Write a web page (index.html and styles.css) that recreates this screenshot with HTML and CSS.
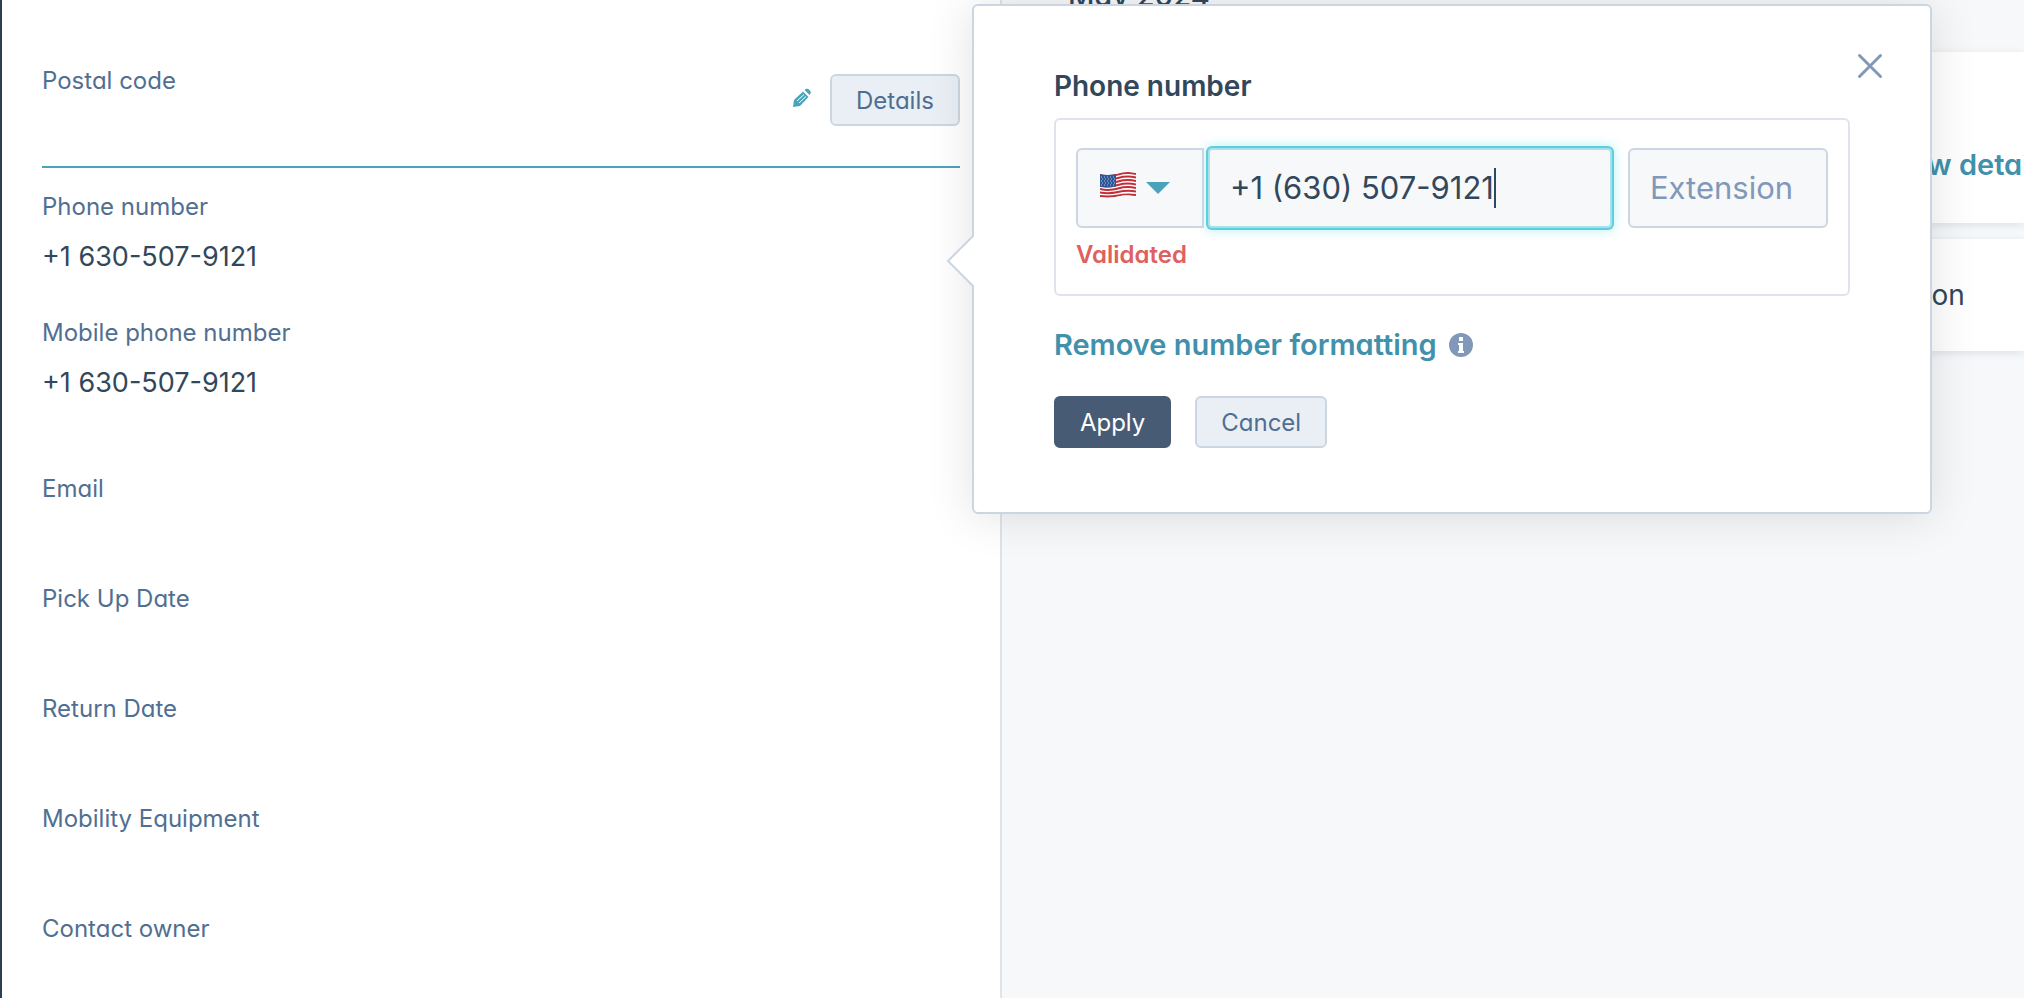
FILE: index.html
```html
<!DOCTYPE html>
<html lang="en">
<head>
    <meta charset="UTF-8">
    <title>Contact</title>
    <link rel="stylesheet" href="styles.css">
</head>
<body>
    <aside class="sidebar">
        <div class="field field-active">
            <div class="field-text">
                <div class="label">Postal code</div>
            </div>
            <div class="field-actions">
                <button class="icon-btn" type="button" aria-label="Edit">
                    <svg width="20" height="20" viewBox="0 0 20 20">
                        <path fill="#4ba3bb" d="M1 19l1-7L11 3.500l5.500 5.500L8 18z"/>
                        <path fill="#4ba3bb" d="M12.500 2c2-2 3.500-1.500 5 0s2 3 0 5z"/>
                        <path stroke="#fff" stroke-width="1" d="M5 13l7-6.500M7 15l7-6.500"/>
                    </svg>
                </button>
                <button class="btn" type="button">Details</button>
            </div>
        </div>

        <div class="field">
            <div class="field-text">
                <div class="label">Phone number</div>
                <div class="value">+1 630-507-9121</div>
            </div>

            <form class="popover">
                <svg class="popover-arrow" width="28" height="54" viewBox="0 0 28 54">
                    <path fill="#fff" stroke="#cbd6e2" stroke-width="2" d="M28 1L2 27l26 26"/>
                </svg>
                <button class="close-btn" type="button" aria-label="Close">
                    <svg width="28" height="28" viewBox="0 0 28 28">
                        <path stroke="#8298b8" stroke-width="3" stroke-linecap="round" d="M3.500 3.500l21 21M24.500 3.500l-21 21"/>
                    </svg>
                </button>
                <label class="popover-title" for="phone">Phone number</label>
                <div class="phone-box">
                    <div class="phone-row">
                        <div class="country">
                            <select class="country-select" aria-label="Country">
                                <option value="us" aria-label="United States"></option>
                            </select>
                            <svg class="flag" width="36" height="28" viewBox="0 0 36 28">
                                <clipPath id="wave">
                                    <path d="M0 3Q9 5 18 2.500T36 2V26Q27 23 18 25.500T0 26z"/>
                                </clipPath>
                                <g clip-path="url(#wave)">
                                    <path fill="#fff" d="M0 0h36v28H0z"/>
                                    <g fill="none" stroke="#c0303a" stroke-width="2">
                                        <path d="M0 4Q9 6 18 3.500T36 3"/>
                                        <path d="M0 7.500Q9 9.500 18 7T36 6.500"/>
                                        <path d="M0 11Q9 13 18 10.500T36 10"/>
                                        <path d="M0 14.500Q9 16.500 18 14T36 13.500"/>
                                        <path d="M0 18Q9 20 18 17.500T36 17"/>
                                        <path d="M0 21.500Q9 23 18 21T36 20.500"/>
                                        <path d="M0 25Q9 26 18 24.500T36 24"/>
                                    </g>
                                    <path fill="#2f5798" d="M0 0h16v15.500Q8 17 0 16z"/>
                                    <path stroke="#a9bfe0" stroke-width="1" stroke-dasharray="1 2" d="M1 6h15M2 8h14M1 10h15M2 12h14M1 14h15"/>
                                </g>
                            </svg>
                            <svg class="caret" width="24" height="12" viewBox="0 0 24 12">
                                <path fill="#4ba3bb" d="M0 0h24L12 12z"/>
                            </svg>
                        </div>
                        <div class="phone-input">
                            <input type="tel" id="phone" value="+1 (630) 507-9121">
                            <span class="text-cursor"></span>
                        </div>
                        <input class="extension" type="text" placeholder="Extension" aria-label="Extension">
                    </div>
                    <div class="validation">Validated</div>
                </div>
                <div class="format-row">
                    <a class="link" href="#">Remove number formatting</a>
                    <svg width="24" height="24" viewBox="0 0 24 24">
                        <circle cx="12" cy="12" r="12" fill="#8298b8"/>
                        <path fill="#fff" d="M10 4h4v4h-4zM9 10h5v8h1v2H9v-2h1v-6H9z"/>
                    </svg>
                </div>
                <div class="popover-buttons">
                    <button class="btn btn-primary" type="submit">Apply</button>
                    <button class="btn" type="button">Cancel</button>
                </div>
            </form>
        </div>

        <div class="field field-last">
            <div class="field-text">
                <div class="label">Mobile phone number</div>
                <div class="value">+1 630-507-9121</div>
            </div>
        </div>

        <div class="field field-empty"><div class="label">Email</div></div>
        <div class="field field-empty"><div class="label">Pick Up Date</div></div>
        <div class="field field-empty"><div class="label">Return Date</div></div>
        <div class="field field-empty"><div class="label">Mobility Equipment</div></div>
        <div class="field field-empty"><div class="label">Contact owner</div></div>
    </aside>

    <main class="timeline">
        <h2 class="month">May 2024</h2>
        <div class="card card-tall"><a class="link" href="#">View details</a></div>
        <div class="card"><span class="card-text">Association</span></div>
    </main>
</body>
</html>
```

FILE: styles.css
```css
* {
    box-sizing: border-box;
}

body {
    margin: 0;
    height: 100vh;
    display: flex;
    overflow: hidden;
    font-family: Inter, "Open Sans", sans-serif;
    font-feature-settings: "cv11";
    font-size: 24px;
    line-height: 32px;
    color: #33475b;
    background-color: #f6f8fa;
}

button, input, select {
    font: inherit;
    font-feature-settings: inherit;
    color: inherit;
}

.sidebar {
    flex: none;
    width: 49.5%;
    padding: 42px 40px 0;
    background-color: #fff;
    border-left: 2px solid #2d3e50;
    border-right: 2px solid #dfe3eb;
}

.field {
    position: relative;
    display: flex;
    justify-content: space-between;
    height: 126px;
    padding-top: 23px;
}

.field-active {
    border-bottom: 2px solid #4ba3bb;
}

.field-last {
    margin-bottom: 30px;
}

.field-empty {
    height: 110px;
}

.field-actions {
    display: flex;
    align-items: center;
    align-self: flex-start;
    gap: 18px;
    margin-top: 9px;
}

.label {
    color: #516f90;
}

.value {
    margin-top: 14px;
    font-size: 27px;
    line-height: 40px;
}

.btn {
    height: 52px;
    padding: 2px 24px 0;
    color: #506e91;
    background-color: #eaeff6;
    border: 2px solid #cbd6e2;
    border-radius: 6px;
    cursor: pointer;
}

.btn-primary {
    color: #fff;
    background-color: #475b74;
    border-color: #475b74;
}

.icon-btn, .close-btn {
    display: flex;
    padding: 0;
    background: none;
    border: none;
    cursor: pointer;
}

.icon-btn {
    padding-bottom: 4px;
}

/* popover */
.popover {
    position: absolute;
    z-index: 2;
    top: -164px;
    left: calc(100% + 12px);
    width: 960px;
    height: 510px;
    padding: 60px 80px 0;
    background-color: #fff;
    border: 2px solid #cbd6e2;
    border-radius: 6px;
    box-shadow: 0 2px 48px rgba(0, 0, 0, 0.12);
}

.popover-arrow {
    position: absolute;
    top: 228px;
    left: -28px;
}

.close-btn {
    position: absolute;
    top: 46px;
    right: 46px;
}

.popover-title {
    display: block;
    margin-bottom: 12px;
    font-size: 28px;
    line-height: 40px;
    font-weight: 600;
}

.phone-box {
    height: 178px;
    padding: 28px 20px 0;
    border: 2px solid #dfe3eb;
    border-radius: 6px;
}

.phone-row {
    display: flex;
    height: 80px;
    font-size: 31px;
}

.country {
    position: relative;
    width: 128px;
    margin-right: 4px;
}

.country-select {
    width: 100%;
    height: 100%;
    appearance: none;
    background-color: #f6f8fa;
    border: 2px solid #cbd6e2;
    border-radius: 6px 0 0 6px;
}

.flag, .caret {
    position: absolute;
    pointer-events: none;
}

.flag {
    top: 23px;
    left: 24px;
}

.caret {
    top: 34px;
    left: 70px;
}

.phone-input {
    flex: 1;
    display: flex;
    align-items: center;
    margin-right: 16px;
    padding-left: 20px;
    background-color: #f6f8fa;
    border: 2px solid #a5e2ea;
    border-radius: 4px;
    box-shadow: 0 0 0 2px #62cddf, 0 0 12px 2px rgba(0, 208, 228, 0.3);
}

.phone-input input {
    field-sizing: content;
    padding: 0;
    background: none;
    border: none;
    outline: none;
}

.text-cursor {
    width: 2px;
    height: 40px;
    background-color: #33475b;
}

.extension {
    width: 200px;
    padding: 0 20px;
    background-color: #f6f8fa;
    border: 2px solid #cbd6e2;
    border-radius: 6px;
}

.extension::placeholder {
    color: #8298b8;
    opacity: 1;
}

.validation {
    margin-top: 11px;
    font-weight: 600;
    color: #df6060;
}

.link {
    font-size: 29px;
    line-height: 40px;
    font-weight: 600;
    color: #4190ac;
    text-decoration: none;
}

.format-row {
    display: flex;
    align-items: center;
    gap: 12px;
    margin-top: 29px;
}

.popover-buttons {
    display: flex;
    gap: 24px;
    margin-top: 31px;
}

/* timeline behind the popover */
.timeline {
    flex: 1;
    min-width: 0;
    padding-left: 66px;
}

.month {
    margin: -24px 0 36px;
    font-size: 29px;
    line-height: 40px;
    font-weight: 500;
}

.card {
    display: flex;
    align-items: center;
    height: 112px;
    margin-bottom: 16px;
    padding-left: 742px;
    white-space: nowrap;
    background-color: #fff;
    box-shadow: 0 2px 8px rgba(45, 62, 80, 0.12);
}

.card-tall {
    height: 171px;
    padding: 54px 0 0 814px;
}

.card-text {
    font-size: 28px;
}
```
